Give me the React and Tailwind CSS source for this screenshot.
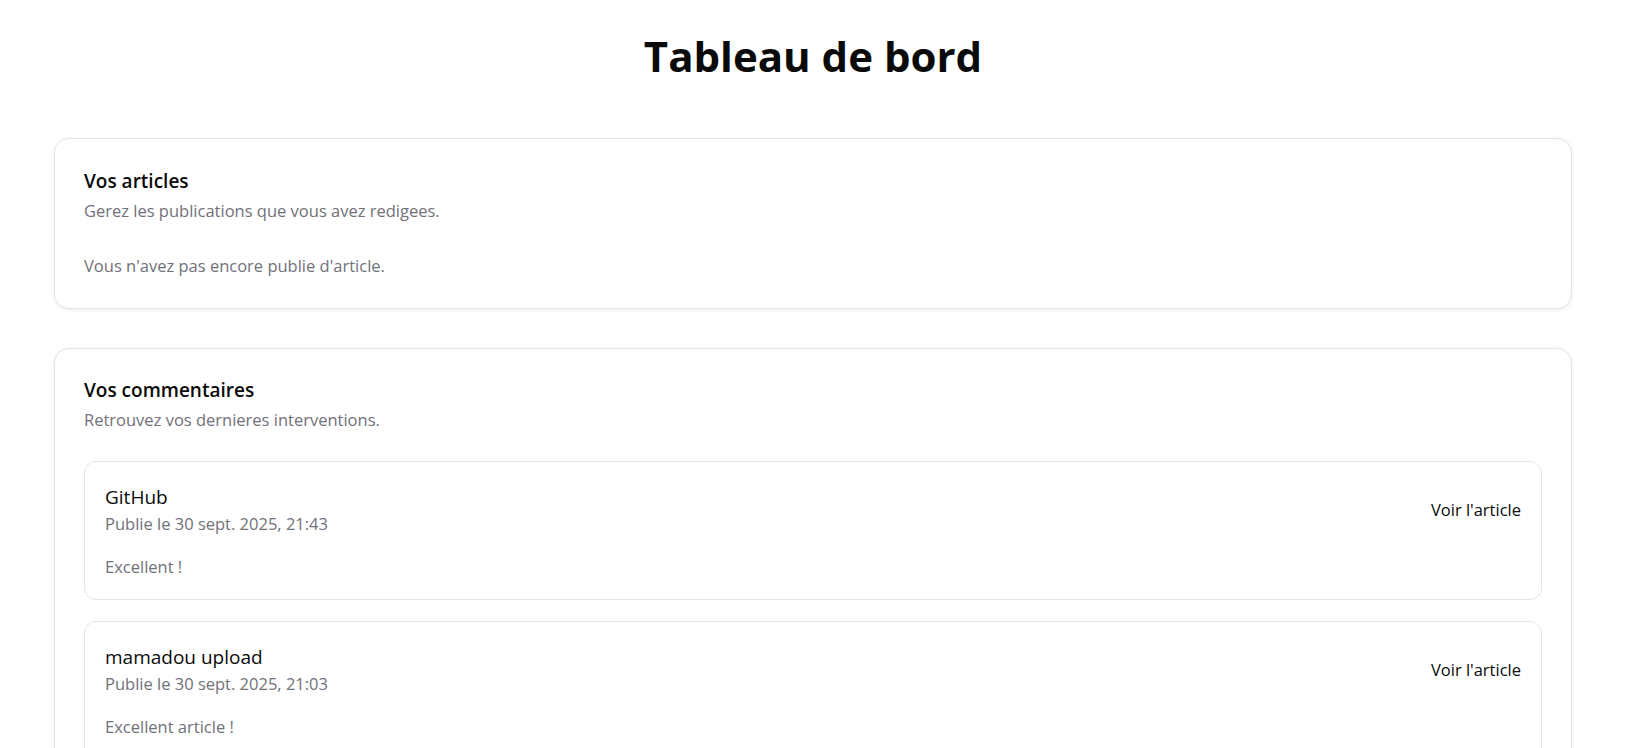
import React from 'react';

const comments = [
  {
    id: 1,
    article: 'GitHub',
    date: 'Publie le 30 sept. 2025, 21:43',
    content: 'Excellent !',
  },
  {
    id: 2,
    article: 'mamadou upload',
    date: 'Publie le 30 sept. 2025, 21:03',
    content: 'Excellent article !',
  },
];

const font = { fontFamily: '"Segoe UI", "Open Sans", sans-serif' };

const Section = ({ title, description, className = '', children }) => (
  <section
    className={`rounded-[15px] border border-[#e5e5e5] bg-white px-[29px] shadow-[0_1px_4px_rgba(0,0,0,0.08)] ${className}`}
  >
    <h2 className="text-[19px] leading-[28px] font-semibold text-[#0a0a0a]">{title}</h2>
    <p className="mt-[4px] text-[16.5px] leading-[24px] text-[#71717a]">{description}</p>
    {children}
  </section>
);

const CommentItem = ({ comment }) => (
  <div className="rounded-[12px] border border-[#e5e5e5] bg-white px-[20px] pt-[21px] pb-[20px]">
    <div className="flex items-center justify-between">
      <div>
        <p className="text-[19px] leading-[28px] text-[#0a0a0a]">{comment.article}</p>
        <p className="mt-[1px] text-[16.5px] leading-[24px] text-[#71717a]">{comment.date}</p>
      </div>
      <a href="#" className="text-[16.5px] leading-[24px] text-[#0a0a0a]">
        Voir l'article
      </a>
    </div>
    <p className="mt-[19px] text-[16.5px] leading-[24px] text-[#71717a]">{comment.content}</p>
  </div>
);

const App = () => {
  return (
    <div className="min-h-screen bg-white pl-[54px] pr-[78px] pt-[31px] pb-10" style={font}>
      <h1 className="text-center text-[42px] leading-[50px] font-bold text-[#0a0a0a]">
        Tableau de bord
      </h1>

      <div className="mt-[57px] flex flex-col gap-[39px]">
        <Section
          title="Vos articles"
          description="Gerez les publications que vous avez redigees."
          className="pt-[28px] pb-[30px]"
        >
          <p className="mt-[31px] text-[16.5px] leading-[24px] text-[#71717a]">
            Vous n'avez pas encore publie d'article.
          </p>
        </Section>

        <Section
          title="Vos commentaires"
          description="Retrouvez vos dernieres interventions."
          className="pt-[27px] pb-[28px]"
        >
          <div className="mt-[29px] flex flex-col gap-[21px]">
            {comments.map((comment) => (
              <CommentItem key={comment.id} comment={comment} />
            ))}
          </div>
        </Section>
      </div>
    </div>
  );
};

export default App;
